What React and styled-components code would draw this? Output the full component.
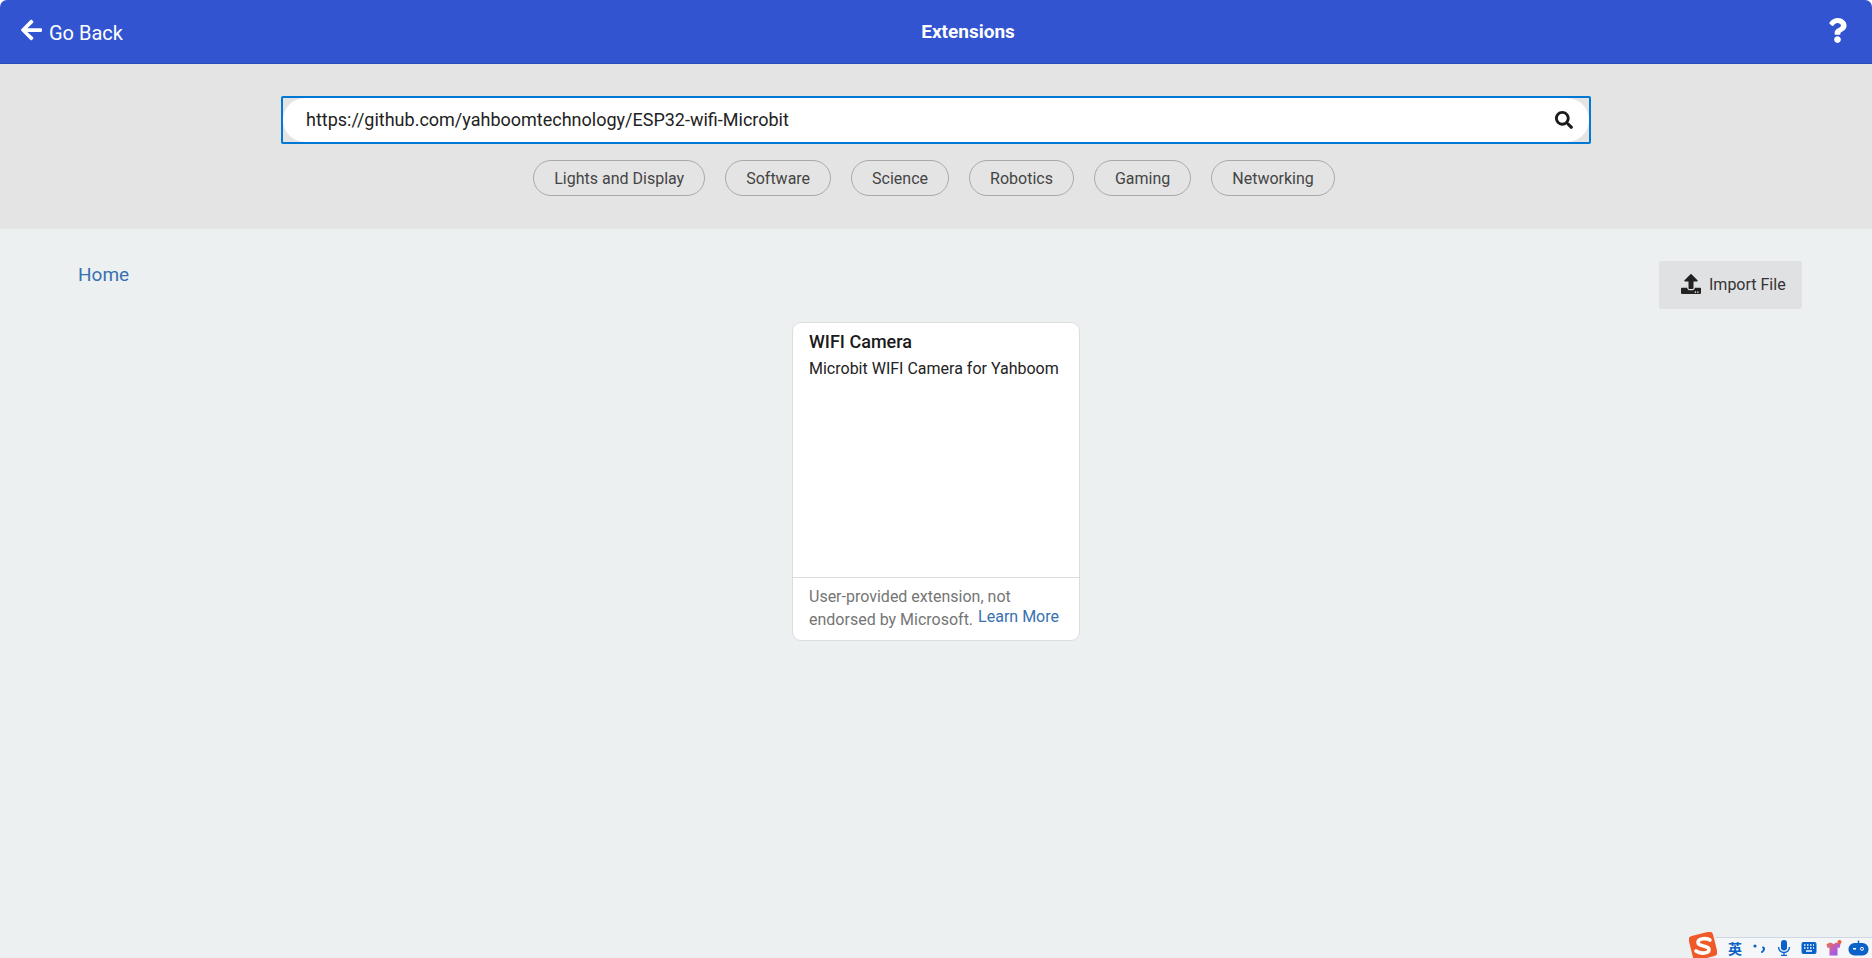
import React from 'react';
import styled, { createGlobalStyle } from 'styled-components';
import { FaArrowLeft, FaQuestion, FaSearch, FaUpload } from 'react-icons/fa';

const GlobalStyle = createGlobalStyle`
  html, body {
    margin: 0;
    height: 100%;
    background: #ffffff;
  }
  #root {
    height: 100%;
  }
  * {
    box-sizing: border-box;
  }
`;

const Page = styled.div`
  position: relative;
  display: flex;
  flex-direction: column;
  height: 958px;
  overflow: hidden;
  background: #ecf0f1;
  border-radius: 7px 7px 0 0;
  font-family: Roboto, "Liberation Sans", sans-serif;
`;

const Header = styled.header`
  display: grid;
  grid-template-columns: 1fr auto 1fr;
  align-items: center;
  flex: none;
  height: 64px;
  padding: 0 20px;
  background: #3254d0;
  border-bottom: 1px solid #2d4cb8;
  color: #ffffff;
`;

const BackLink = styled.a`
  display: flex;
  align-items: center;
  gap: 6px;
  padding-top: 2px;
  font-size: 20px;
  svg {
    width: 23px;
    height: 24px;
    margin-top: -5px;
  }
`;

const Title = styled.h1`
  margin: 0 0 0 64px;
  font-size: 19px;
  font-weight: 700;
`;

const HelpIcon = styled.div`
  justify-self: end;
  display: flex;
  margin-right: 2px;
  svg {
    width: 25px;
    height: 25px;
    margin-top: -3px;
  }
`;

const SearchArea = styled.section`
  display: flex;
  flex-direction: column;
  align-items: center;
  flex: none;
  height: 165px;
  padding-top: 32px;
  background: #e4e4e4;
`;

const SearchBox = styled.div`
  display: flex;
  align-items: center;
  justify-content: space-between;
  width: 1310px;
  height: 48px;
  border: 2px solid #0078d4;
  border-radius: 2px;
  background: #e4e4e4;
`;

const SearchField = styled.div`
  display: flex;
  align-items: center;
  justify-content: space-between;
  width: 100%;
  height: 100%;
  padding: 0 16px 2px 23px;
  background: #ffffff;
  border-radius: 24px;
  color: #222222;
  font-size: 18px;
  svg {
    width: 18px;
    height: 18px;
    margin-top: 2px;
    color: #1a1a1a;
  }
`;

const Chips = styled.div`
  display: flex;
  gap: 20px;
  margin: 16px 4px 0 0;
`;

const Chip = styled.button`
  height: 36px;
  padding: 0 20px;
  border: 1px solid #a9a9a9;
  border-radius: 18px;
  background: transparent;
  color: #444444;
  font-family: inherit;
  font-size: 16px;
`;

const Main = styled.main`
  flex: 1;
  padding: 32px 70px 0 78px;
`;

const TopRow = styled.div`
  display: flex;
  align-items: flex-start;
  justify-content: space-between;
`;

const HomeLink = styled.a`
  padding-top: 1px;
  color: #3870b0;
  font-size: 19px;
  line-height: 26px;
`;

const ImportButton = styled.button`
  display: flex;
  align-items: center;
  gap: 8px;
  width: 143px;
  height: 48px;
  padding: 0 0 2px 22px;
  border: none;
  border-radius: 3px;
  background: #e0e1e3;
  color: #333333;
  font-family: inherit;
  font-size: 16px;
  svg {
    width: 20px;
    height: 20px;
    color: #222222;
  }
`;

const Cards = styled.div`
  display: flex;
  justify-content: center;
  margin: 13px 0 0 -8px;
`;

const Card = styled.article`
  display: flex;
  flex-direction: column;
  width: 288px;
  height: 319px;
  background: #ffffff;
  border: 1px solid #dcdcdc;
  border-radius: 9px;
`;

const CardBody = styled.div`
  flex: 1;
  padding: 7px 16px;
`;

const CardTitle = styled.h3`
  margin: 0;
  color: #1a1a1a;
  font-size: 18px;
  font-weight: 500;
  line-height: 24px;
`;

const CardText = styled.p`
  margin: 4px 0 0;
  color: #222222;
  font-size: 16px;
  line-height: 22px;
`;

const CardFooter = styled.div`
  flex: none;
  height: 63px;
  padding: 7px 20px 0 16px;
  border-top: 1px solid #dcdcdc;
  color: #757575;
  font-size: 16px;
  line-height: 23px;
`;

const FooterLine = styled.div`
  display: flex;
  align-items: flex-start;
  justify-content: space-between;
`;

const LearnMore = styled.a`
  color: #3870b0;
  margin-top: -3px;
`;

const ImeBar = styled.div`
  position: absolute;
  right: 0;
  bottom: 0;
  display: flex;
  align-items: center;
  width: 156px;
  height: 21px;
  padding-left: 12px;
  gap: 9px;
  background: #f4f6f8;
  border-top: 1px solid #cdd8e4;
  color: #0a62c8;
`;

const ImeLogo = styled.svg`
  position: absolute;
  left: -27px;
  top: -6px;
  width: 28px;
  height: 28px;
`;

const ImeLabel = styled.span`
  font-family: "Noto Sans CJK SC", sans-serif;
  font-size: 14px;
  font-weight: 700;
  line-height: 20px;
`;

const ImeIcon = styled.svg`
  flex: none;
  width: 16px;
  height: 16px;
`;

const ImeBot = styled.svg`
  flex: none;
  width: 21px;
  height: 16px;
  margin-left: -3px;
`;

const categories = ['Lights and Display', 'Software', 'Science', 'Robotics', 'Gaming', 'Networking'];

const App = () => (
  <Page>
    <GlobalStyle />
    <Header>
      <BackLink>
        <FaArrowLeft />
        Go Back
      </BackLink>
      <Title>Extensions</Title>
      <HelpIcon>
        <FaQuestion />
      </HelpIcon>
    </Header>

    <SearchArea>
      <SearchBox>
        <SearchField>
          https://github.com/yahboomtechnology/ESP32-wifi-Microbit
          <FaSearch />
        </SearchField>
      </SearchBox>
      <Chips>
        {categories.map((name) => (
          <Chip key={name}>{name}</Chip>
        ))}
      </Chips>
    </SearchArea>

    <Main>
      <TopRow>
        <HomeLink>Home</HomeLink>
        <ImportButton>
          <FaUpload />
          Import File
        </ImportButton>
      </TopRow>
      <Cards>
        <Card>
          <CardBody>
            <CardTitle>WIFI Camera</CardTitle>
            <CardText>Microbit WIFI Camera for Yahboom</CardText>
          </CardBody>
          <CardFooter>
            <FooterLine>User-provided extension, not</FooterLine>
            <FooterLine>
              <span>endorsed by Microsoft.</span>
              <LearnMore>Learn More</LearnMore>
            </FooterLine>
          </CardFooter>
        </Card>
      </Cards>
    </Main>

    <ImeBar>
      <ImeLogo viewBox="0 0 28 28">
        <rect x="1.5" y="1.5" width="25" height="25" rx="4" fill="#f05a28" transform="rotate(-14 14 14)" />
        <path d="M21 8c-3-2.2-12-2-12 2.5s11 2.5 11 7-9 4.500-13 1.500" fill="none" stroke="#ffffff" strokeWidth="3.6" strokeLinecap="round" />
      </ImeLogo>
      <ImeLabel>英</ImeLabel>
      <ImeIcon viewBox="0 0 16 16">
        <circle cx="4" cy="6" r="1.6" fill="currentColor" />
        <path d="M12 7.500c1.500 0 1.500 3-1 4.500" fill="none" stroke="currentColor" strokeWidth="2" strokeLinecap="round" />
      </ImeIcon>
      <ImeIcon viewBox="0 0 16 16">
        <rect x="5" y="0" width="6" height="10.500" rx="3" fill="currentColor" />
        <path d="M2.500 7a5.500 5.500 0 0 0 11 0M8 12.500V16M5 15.500h6" fill="none" stroke="currentColor" strokeWidth="1.400" />
      </ImeIcon>
      <ImeIcon viewBox="0 0 16 16">
        <rect x="0.500" y="2" width="15" height="12" rx="2" fill="currentColor" />
        <path d="M3 5h1.500M6 5h1.500M9 5h1.500M12 5h1M3 8h1.500M6 8h1.500M9 8h1.500M12 8h1M5 11h6" stroke="#ffffff" strokeWidth="1.300" />
      </ImeIcon>
      <ImeIcon viewBox="0 0 16 16">
        <defs>
          <linearGradient id="shirtFill" x1="0" y1="0" x2="1" y2="1">
            <stop offset="0" stopColor="#f0703c" />
            <stop offset="0.600" stopColor="#b45ad8" />
            <stop offset="1" stopColor="#7a6ae8" />
          </linearGradient>
        </defs>
        <path d="M0.500 4l4-1.500 3 1.500 3-1.500 4 1.500-1 4-2-.5V15.500H3.500V7.500l-2 .5z" fill="url(#shirtFill)" />
        <circle cx="13.500" cy="2" r="2" fill="#f0563a" />
      </ImeIcon>
      <ImeBot viewBox="0 0 21 16">
        <rect x="0.500" y="3" width="20" height="12.500" rx="6" fill="currentColor" />
        <path d="M10.500 3V0.500" stroke="currentColor" strokeWidth="1.500" />
        <rect x="5" y="8" width="3" height="1.500" fill="#ffffff" />
        <circle cx="14" cy="8.800" r="1.500" fill="none" stroke="#ffffff" />
      </ImeBot>
    </ImeBar>
  </Page>
);

export default App;
